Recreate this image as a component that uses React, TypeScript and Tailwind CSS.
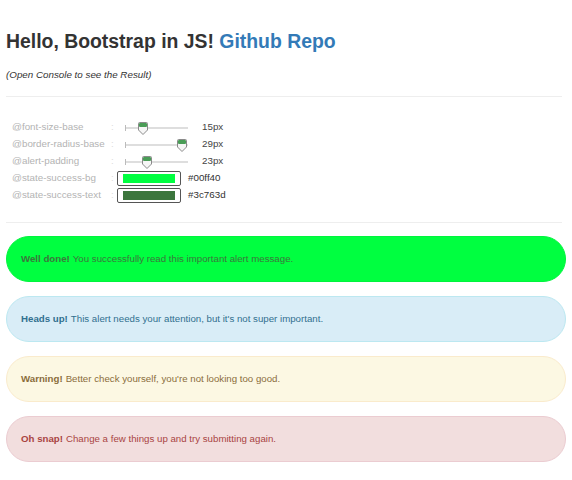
import React from "react";

const Thumb: React.FC<{ left: number }> = ({ left }) => (
  <svg
    className="absolute top-[-5px]"
    style={{ left }}
    width="10"
    height="13"
    viewBox="0 0 10 13"
  >
    <path
      d="M1.5 0.5 H8.5 Q9.5 0.5 9.5 1.5 V8 L5 12.5 L0.5 8 V1.5 Q0.5 0.5 1.5 0.5 Z"
      fill="#f6f6f6"
      stroke="#8a8a8a"
    />
    <rect x="1" y="1" width="8" height="4" rx="1" fill="#4a9d57" />
  </svg>
);

const SliderRow: React.FC<{ label: string; pos: number; value: string }> = ({
  label,
  pos,
  value,
}) => (
  <div className="flex h-[17px] items-center">
    <span className="w-[99px] text-[#b3b3b3]">{label}</span>
    <span className="w-[14px] text-[#dcdcdc]">:</span>
    <div className="relative h-[2px] w-[63px] bg-[#dedede]">
      <div className="absolute left-0 top-[-2px] h-[6px] w-px bg-[#bbbbbb]" />
      <Thumb left={pos} />
    </div>
    <span className="ml-[14px] text-[#444]">{value}</span>
  </div>
);

const ColorRow: React.FC<{ label: string; color: string }> = ({ label, color }) => (
  <div className="flex h-[17px] items-center">
    <span className="w-[99px] text-[#b3b3b3]">{label}</span>
    <span className="w-[6px] text-[#dcdcdc]">:</span>
    <div className="flex h-[15px] w-[64px] items-center rounded-[2px] border border-[#555] bg-white px-[5px]">
      <div className="h-[9px] w-[52px]" style={{ backgroundColor: color }} />
    </div>
    <span className="ml-[7px] text-[#333]">{color}</span>
  </div>
);

const Alert: React.FC<{
  title: string;
  text: string;
  cls: string;
}> = ({ title, text, cls }) => (
  <div className={`flex h-[46px] items-center rounded-[23px] border px-[14px] ${cls}`}>
    <b className="font-bold">{title}</b>
    <span className="ml-[3px]">{text}</span>
  </div>
);

export default function App() {
  return (
    <div className="min-h-[480px] bg-white px-[6px] font-['Liberation_Sans',Arial,sans-serif] text-[#333]">
      <h1 className="pt-[30px] text-[19.4px] font-bold leading-[22px]">
        Hello, Bootstrap in JS! <span className="text-[#337ab7]">Github Repo</span>
      </h1>
      <p className="mt-[17px] text-[9.8px] italic leading-[12px]">
        (Open Console to see the Result)
      </p>
      <div className="mr-[4px] mt-[15px] h-px bg-[#eeeeee]" />
      <div className="mt-[22px] pl-[6px] text-[9.8px]">
        <SliderRow label="@font-size-base" pos={13} value="15px" />
        <SliderRow label="@border-radius-base" pos={52} value="29px" />
        <SliderRow label="@alert-padding" pos={17} value="23px" />
        <ColorRow label="@state-success-bg" color="#00ff40" />
        <ColorRow label="@state-success-text" color="#3c763d" />
      </div>
      <div className="mr-[4px] mt-[18px] h-px bg-[#eeeeee]" />
      <div className="mt-[13px] flex flex-col gap-[14px] text-[9.7px]">
        <Alert
          title="Well done!"
          text="You successfully read this important alert message."
          cls="border-[#00f43d] bg-[#00ff40] text-[#3c763d]"
        />
        <Alert
          title="Heads up!"
          text="This alert needs your attention, but it's not super important."
          cls="border-[#bce8f1] bg-[#d9edf7] text-[#31708f]"
        />
        <Alert
          title="Warning!"
          text="Better check yourself, you're not looking too good."
          cls="border-[#faebcc] bg-[#fcf8e3] text-[#8a6d3b]"
        />
        <Alert
          title="Oh snap!"
          text="Change a few things up and try submitting again."
          cls="border-[#ebccd1] bg-[#f2dede] text-[#a94442]"
        />
      </div>
    </div>
  );
}
